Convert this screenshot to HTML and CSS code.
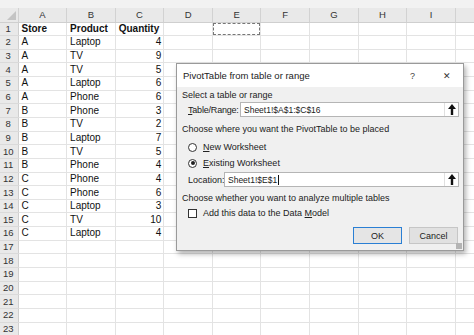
FILE: index.html
```html
<!DOCTYPE html>
<html lang="en">
<head>
	<meta charset="UTF-8">
	<title>PivotTable from table or range</title>
	<link rel="stylesheet" href="styles.css">
</head>
<body>
	<div class="app">
		<div class="topband"></div>
		<table class="sheet">
			<colgroup>
				<col class="c-hd">
				<col class="c"><col class="c"><col class="c"><col class="c"><col class="c">
				<col class="c"><col class="c"><col class="c"><col class="c"><col class="c">
			</colgroup>
			<thead>
				<tr>
					<th class="corner"><span class="tri"></span></th>
					<th>A</th><th>B</th><th>C</th><th>D</th><th>E</th>
					<th>F</th><th>G</th><th>H</th><th>I</th><th></th>
				</tr>
			</thead>
			<tbody id="rows"></tbody>
		</table>

		<div class="dialog">
			<div class="title">
				<span class="title-text">PivotTable from table or range</span>
				<span class="help">?</span>
				<span class="close">&#x2715;</span>
			</div>
			<div class="body">
				<div class="section">Select a table or range</div>
				<div class="field">
					<span class="lbl lbl-range"><u>T</u>able/Range:</span>
					<div class="input">
						<span class="val">Sheet1!$A$1:$C$16</span>
						<span class="pick"><svg width="8" height="11" viewBox="0 0 8 11"><path d="M4 0 L8 5 L5.2 5 L5.2 11 L2.8 11 L2.8 5 L0 5 Z" fill="#111"/></svg></span>
					</div>
				</div>
				<div class="section s2">Choose where you want the PivotTable to be placed</div>
				<div class="opt o1"><span class="radio"></span><span><u>N</u>ew Worksheet</span></div>
				<div class="opt o2"><span class="radio on"></span><span><u>E</u>xisting Worksheet</span></div>
				<div class="field f2">
					<span class="lbl lbl-loc">Location:</span>
					<div class="input">
						<span class="val">Sheet1!$E$1<span class="caret"></span></span>
						<span class="pick"><svg width="8" height="11" viewBox="0 0 8 11"><path d="M4 0 L8 5 L5.2 5 L5.2 11 L2.8 11 L2.8 5 L0 5 Z" fill="#111"/></svg></span>
					</div>
				</div>
				<div class="section s3">Choose whether you want to analyze multiple tables</div>
				<div class="opt o3"><span class="check"></span><span>Add this data to the Data <u>M</u>odel</span></div>
				<div class="buttons">
					<button class="btn default">OK</button>
					<button class="btn">Cancel</button>
				</div>
			</div>
			<span class="grip"></span>
		</div>
	</div>
	<script>
		// 表格数据
		var data = [
			["Store","Product","Quantity"],
			["A","Laptop",4],["A","TV",9],["A","TV",5],["A","Laptop",6],["A","Phone",6],
			["B","Phone",3],["B","TV",2],["B","Laptop",7],["B","TV",5],["B","Phone",4],
			["C","Phone",4],["C","Phone",6],["C","Laptop",3],["C","TV",10],["C","Laptop",4]
		];
		var tbody = document.getElementById("rows"),
			html = "";
		for(var r = 0; r < 23; r++){
			var row = data[r];
			html += "<tr><th>" + (r + 1) + "</th>";
			for(var c = 0; c < 10; c++){
				var txt = "", cls = "";
				if(row && c < 3){
					txt = row[c];
					if(r == 0) cls = "b";
					else if(c == 2) cls = "num";
				}
				if(r == 0 && c == 4) cls = "sel";
				html += "<td" + (cls ? ' class="' + cls + '"' : "") + ">" + txt + "</td>";
			}
			html += "</tr>";
		}
		tbody.innerHTML = html;
	</script>
</body>
</html>
```

FILE: styles.css
```css
*{
	margin:0;
	padding:0;
	box-sizing:border-box;
}
body{
	width:474px;
	height:335px;
	overflow:hidden;
	background:#fff;
	font-family:"Liberation Sans",Arial,sans-serif;
	color:#111;
}
.app{
	position:relative;
	width:474px;
	height:335px;
	overflow:hidden;
}
.topband{
	height:8px;
	background:#f2f2f2;
}
.sheet{
	border-collapse:collapse;
	table-layout:fixed;
	width:504px;
	font-size:10px;
}
.c-hd{
	width:18px;
}
.c{
	width:48.6px;
}
.sheet th{
	font-weight:normal;
	color:#333;
	background:#e9e9e9;
	text-align:center;
	font-size:9.5px;
}
.sheet thead th{
	height:14px;
	border-right:1px solid #d2d2d2;
	border-bottom:1px solid #cfcfcf;
	line-height:13px;
}
.sheet thead th.corner{
	position:relative;
}
.tri{
	position:absolute;
	right:2px;
	bottom:2px;
	width:0;
	height:0;
	border-left:9px solid transparent;
	border-bottom:9px solid #c4c4c4;
}
.sheet tbody th{
	height:13.65px;
	border-bottom:1px solid #dadada;
	border-right:1px solid #cfcfcf;
	line-height:12px;
	padding-right:1px;
}
.sheet td{
	height:13.65px;
	border-right:1px solid #e3e3e3;
	border-bottom:1px solid #e3e3e3;
	line-height:12px;
	padding:0 2px 0 3px;
	white-space:nowrap;
	overflow:hidden;
}
.sheet td.b{
	font-weight:bold;
}
.sheet td.num{
	text-align:right;
}
.sheet td.sel{
	outline:1px dashed #777;
	outline-offset:-2px;
}

/* 对话框 */
.dialog{
	position:absolute;
	left:176px;
	top:63px;
	width:288px;
	height:188px;
	background:#f0f0f0;
	border:1px solid #9a9a9a;
	box-shadow:2px 3px 5px rgba(0,0,0,0.3);
	font-size:9px;
	color:#222;
	display:flex;
	flex-direction:column;
}
.title{
	height:23px;
	background:#fff;
	display:flex;
	align-items:center;
	padding-left:6px;
	font-size:9.5px;
}
.title-text{
	flex:1;
}
.help{
	width:12px;
	margin-right:21px;
	font-size:9px;
	color:#444;
}
.close{
	width:12px;
	margin-right:8px;
	font-size:9px;
	color:#333;
}
.body{
	flex:1;
	display:flex;
	flex-direction:column;
	padding:2px 4px 0 5px;
}
.section{
	height:13px;
	line-height:13px;
}
.s2{
	margin-top:6px;
}
.s3{
	margin-top:5px;
}
.field{
	display:flex;
	align-items:center;
	height:15px;
}
.f2{
	margin-top:2px;
}
.lbl{
	padding-left:6px;
	white-space:nowrap;
}
.lbl-range{
	width:58px;
	letter-spacing:-0.2px;
}
.lbl-loc{
	width:42px;
	padding-left:6px;
}
.input{
	flex:1;
	height:15px;
	background:#fff;
	border:1px solid #b5b5b5;
	display:flex;
	align-items:center;
	padding-left:3px;
}
.val{
	flex:1;
	font-size:8.5px;
	display:flex;
	align-items:center;
}
.caret{
	display:inline-block;
	width:1px;
	height:10px;
	background:#111;
	margin-left:1px;
}
.pick{
	width:14px;
	height:13px;
	display:flex;
	align-items:center;
	justify-content:center;
	border-left:1px solid #e0e0e0;
}
.opt{
	display:flex;
	align-items:center;
	height:14px;
	padding-left:6px;
}
.o1{
	margin-top:4px;
}
.o2{
	margin-top:2px;
}
.o3{
	margin-top:1px;
}
.radio{
	width:9px;
	height:9px;
	border:1px solid #333;
	border-radius:50%;
	background:#fff;
	margin-right:6px;
	position:relative;
}
.radio.on::after{
	content:"";
	position:absolute;
	left:1.5px;
	top:1.5px;
	width:4px;
	height:4px;
	border-radius:50%;
	background:#222;
}
.check{
	width:9px;
	height:9px;
	border:1px solid #333;
	background:#fff;
	margin-right:6px;
}
.buttons{
	display:flex;
	justify-content:flex-end;
	gap:7px;
	margin-top:7px;
	padding-right:1px;
}
.btn{
	width:49px;
	height:17px;
	border:1px solid #c6c6c6;
	background:#e1e1e1;
	font-family:inherit;
	font-size:9px;
	color:#222;
}
.btn.default{
	border-color:#2a7fd4;
	background:#e5e5e5;
}
.grip{
	position:absolute;
	right:1px;
	bottom:1px;
	width:6px;
	height:6px;
	background:radial-gradient(circle,#b0b0b0 0.7px,transparent 0.8px) 0 0/2px 2px;
}
```
